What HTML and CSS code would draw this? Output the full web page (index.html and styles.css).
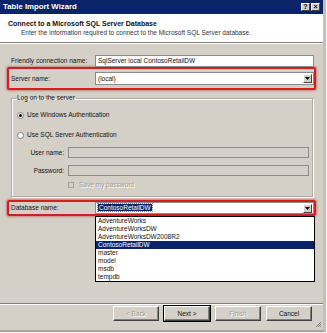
FILE: index.html
```html
<!DOCTYPE html>
<html lang="en">
<head>
    <meta charset="UTF-8">
    <title>Table Import Wizard</title>
    <link rel="stylesheet" href="styles.css">
</head>
<body>
    <div class="window">
        <!-- Title bar -->
        <div class="titlebar">
            <span class="title">Table Import Wizard</span>
            <span class="caption-btns">
                <span class="cbtn">?</span>
                <span class="cbtn">&#215;</span>
            </span>
        </div>

        <!-- Header -->
        <div class="header">
            <div class="header-title">Connect to a Microsoft SQL Server Database</div>
            <div class="header-sub">Enter the information required to connect to the Microsoft SQL Server database.</div>
        </div>

        <!-- Form -->
        <div class="content">
            <div class="row">
                <label class="lbl">Friendly connection name:</label>
                <div class="textbox">SqlServer local ContosoRetailDW</div>
            </div>

            <div class="row highlight server">
                <label class="lbl">Server name:</label>
                <div class="combo">
                    <span class="combo-text">(local)</span>
                    <span class="combo-btn"><svg width="5" height="3" viewBox="0 0 5 3"><path d="M0 0h5L2.5 3z" fill="#000"/></svg></span>
                </div>
            </div>

            <fieldset class="group">
                <legend>Log on to the server</legend>
                <div class="radio-row first">
                    <span class="radio checked"></span>
                    <span>Use Windows Authentication</span>
                </div>
                <div class="radio-row">
                    <span class="radio"></span>
                    <span>Use SQL Server Authentication</span>
                </div>
                <div class="cred-row">
                    <label class="cred-lbl">User name:</label>
                    <div class="textbox disabled"></div>
                </div>
                <div class="cred-row">
                    <label class="cred-lbl">Password:</label>
                    <div class="textbox disabled"></div>
                </div>
                <div class="check-row">
                    <span class="checkbox"></span>
                    <span class="muted">Save my password</span>
                </div>
            </fieldset>

            <div class="row highlight database">
                <label class="lbl">Database name:</label>
                <div class="combo">
                    <span class="combo-text"><span class="selected-text">ContosoRetailDW</span></span>
                    <span class="combo-btn"><svg width="5" height="3" viewBox="0 0 5 3"><path d="M0 0h5L2.5 3z" fill="#000"/></svg></span>
                </div>
                <ul class="dropdown">
                    <li>AdventureWorks</li>
                    <li>AdventureWorksDW</li>
                    <li>AdventureWorksDW2008R2</li>
                    <li class="active">ContosoRetailDW</li>
                    <li>master</li>
                    <li>model</li>
                    <li>msdb</li>
                    <li>tempdb</li>
                </ul>
            </div>
        </div>

        <!-- Buttons -->
        <div class="footer">
            <button class="btn" disabled>&lt; Back</button>
            <button class="btn default">Next &gt;</button>
            <button class="btn" disabled>Finish</button>
            <button class="btn">Cancel</button>
        </div>

        <svg class="grip" width="7" height="7" viewBox="0 0 7 7">
            <path d="M6 1L1 6M6 3L3 6M6 5L5 6" stroke="#808080" stroke-width="1"/>
        </svg>
    </div>
</body>
</html>
```

FILE: styles.css
```css
* {
    margin: 0;
    padding: 0;
    box-sizing: border-box;
}

body {
    background: #f4f4f4;
    font-family: 'Liberation Sans', Arial, sans-serif;
    font-size: 6.5px;
    line-height: 8px;
    color: #111;
}

/* Window frame */
.window {
    position: relative;
    width: 326px;
    height: 332px;
    background: #d4d0c8;
    border-right: 3px solid #c4c0b8;
    border-bottom: 2px solid #a8a49c;
    display: flex;
    flex-direction: column;
}

.titlebar {
    height: 14px;
    background: #0a246a;
    color: #fff;
    display: flex;
    align-items: center;
    justify-content: space-between;
    padding: 0 3px 0 3px;
    font-weight: bold;
    font-size: 7.8px;
}

.caption-btns {
    display: flex;
    gap: 1px;
}

.cbtn {
    width: 9px;
    height: 8px;
    background: #d4d0c8;
    color: #000;
    border: 1px solid;
    border-color: #fff #404040 #404040 #fff;
    font-size: 7px;
    line-height: 6px;
    text-align: center;
}

/* White header */
.header {
    background: #fff;
    height: 29px;
    padding: 6px 0 0 8px;
    border-bottom: 1px solid #808080;
    box-shadow: 0 1px #fff;
}

.header-title {
    font-weight: bold;
    font-size: 7px;
}

.header-sub {
    padding-left: 13px;
    margin-top: 1px;
    color: #333;
}

/* Form */
.content {
    padding: 12px 7px 0 7px;
}

.row {
    display: flex;
    align-items: center;
    padding: 0 2px 0 4px;
}

.lbl {
    width: 84px;
    flex: none;
}

.textbox {
    flex: 1;
    height: 12px;
    background: #fff;
    border: 1px solid #8c8c8c;
    padding-left: 2px;
    line-height: 10px;
}

.textbox.disabled {
    height: 11px;
    background: #d4d0c8;
    margin-right: 3px;
}

.highlight {
    border: 2px solid #d21e1e;
    border-radius: 2px;
    box-shadow: 0 0 2px 1px rgba(190, 40, 40, 0.45);
    padding: 0 0 0 2px;
}

.highlight.server {
    padding-top: 3px;
    padding-bottom: 3px;
}

.combo {
    flex: 1;
    height: 13px;
    background: #fff;
    border: 1px solid #8c8c8c;
    display: flex;
    align-items: center;
    padding: 0 1px 0 2px;
}

.database .combo {
    height: 12px;
}

.selected-text {
    background: #0a246a;
    color: #fff;
    outline: 1px dotted #808080;
    padding: 0 1px;
}

.combo-btn {
    margin-left: auto;
    width: 9px;
    height: 9px;
    background: #d4d0c8;
    border: 1px solid;
    border-color: #fff #404040 #404040 #fff;
    display: flex;
    align-items: center;
    justify-content: center;
}

/* Group box */
.group {
    margin: 4px 3px 0 4px;
    border: 1px solid #b0aca4;
    box-shadow: inset 1px 1px #fff, 1px 1px #fff;
    padding: 0 0 6px 0;
}

.group legend {
    margin-left: 4px;
    padding: 0 1px;
}

.radio-row {
    display: flex;
    align-items: center;
    gap: 3px;
    height: 10px;
    padding-left: 5px;
    margin-top: 10px;
}

.radio-row.first {
    margin-top: 8px;
}

.radio {
    width: 7px;
    height: 7px;
    border-radius: 50%;
    background: #fff;
    border: 1px solid #808080;
    display: flex;
    align-items: center;
    justify-content: center;
}

.radio.checked::after {
    content: "";
    width: 3px;
    height: 3px;
    border-radius: 50%;
    background: #000;
}

.cred-row {
    display: flex;
    align-items: center;
    margin-top: 7px;
}

.cred-lbl {
    width: 56px;
    flex: none;
    text-align: right;
    padding-right: 4px;
}

.check-row {
    display: flex;
    align-items: center;
    gap: 5px;
    height: 10px;
    padding-left: 56px;
    margin-top: 4px;
}

.checkbox {
    width: 6px;
    height: 6px;
    border: 1px solid #a0a0a0;
    background: #d4d0c8;
}

.muted {
    color: #a09c94;
    text-shadow: 1px 1px #fff;
}

/* Database row and its open list */
.database {
    position: relative;
    margin-top: 3px;
}

.dropdown {
    position: absolute;
    left: 86px;
    top: calc(100% + 2px);
    width: 220px;
    list-style: none;
    background: #fff;
    border: 1px solid #000;
    z-index: 2;
}

.dropdown li {
    height: 8px;
    line-height: 8px;
    padding-left: 2px;
}

.dropdown li.active {
    background: #0a246a;
    color: #fff;
}

/* Footer buttons */
.footer {
    margin-top: auto;
    border-top: 1px solid #808080;
    box-shadow: inset 0 1px #fff;
    display: flex;
    justify-content: flex-end;
    gap: 5px;
    padding: 2px 11px 9px 0;
}

.btn {
    width: 46px;
    height: 15px;
    background: #d4d0c8;
    border: 1px solid;
    border-color: #fff #404040 #404040 #fff;
    box-shadow: inset -1px -1px #808080;
    font-family: inherit;
    font-size: 6.5px;
    color: #111;
}

.btn.default {
    outline: 1px solid #000;
}

.btn:disabled {
    color: #a09c94;
    text-shadow: 1px 1px #fff;
}

.grip {
    position: absolute;
    right: 1px;
    bottom: 2px;
}
```
